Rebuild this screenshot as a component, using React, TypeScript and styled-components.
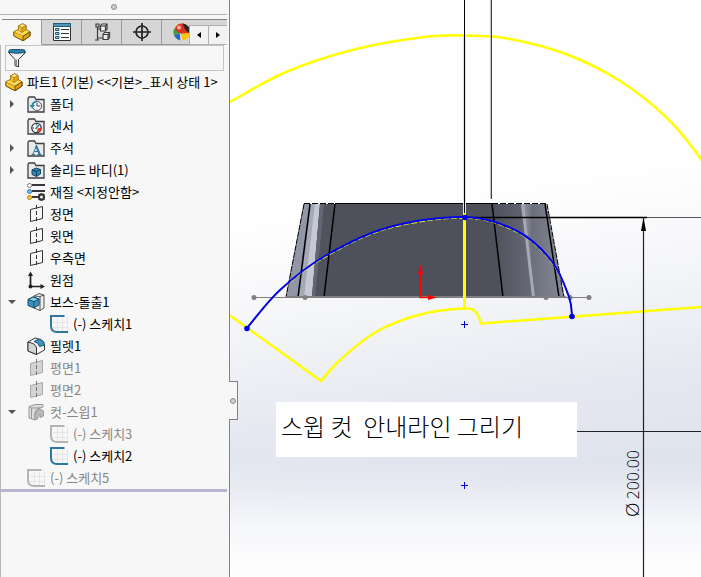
import React from 'react';
import styled, { createGlobalStyle } from 'styled-components';

const panelColor = '#f7f7f7';

type IconName =
  | 'history'
  | 'sensor'
  | 'note'
  | 'solid'
  | 'material'
  | 'plane'
  | 'origin'
  | 'extrude'
  | 'sketch'
  | 'fillet'
  | 'sweep';

type TreeItem = {
  label: string;
  icon: IconName;
  depth?: number;
  arrow?: 'open' | 'closed';
  muted?: boolean;
};

type Point = [number, number];

const treeItems: TreeItem[] = [
  { label: '폴더', icon: 'history', arrow: 'closed' },
  { label: '센서', icon: 'sensor' },
  { label: '주석', icon: 'note', arrow: 'closed' },
  { label: '솔리드 바디(1)', icon: 'solid', arrow: 'closed' },
  { label: '재질 <지정안함>', icon: 'material' },
  { label: '정면', icon: 'plane' },
  { label: '윗면', icon: 'plane' },
  { label: '우측면', icon: 'plane' },
  { label: '원점', icon: 'origin' },
  { label: '보스-돌출1', icon: 'extrude', arrow: 'open' },
  { label: '(-) 스케치1', icon: 'sketch', depth: 1 },
  { label: '필렛1', icon: 'fillet' },
  { label: '평면1', icon: 'plane', muted: true },
  { label: '평면2', icon: 'plane', muted: true },
  { label: '컷-스윕1', icon: 'sweep', arrow: 'open', muted: true },
  { label: '(-) 스케치3', icon: 'sketch', depth: 1, muted: true },
  { label: '(-) 스케치2', icon: 'sketch', depth: 1 },
  { label: '(-) 스케치5', icon: 'sketch', muted: true },
];

// cubic segments through every point (Catmull-Rom)
const smoothPath = (points: Point[]) =>
  points.slice(1).reduce((path, end, i) => {
    const start = points[i];
    const before = points[i - 1] ?? start;
    const after = points[i + 2] ?? end;
    const c1 = [start[0] + (end[0] - before[0]) / 6, start[1] + (end[1] - before[1]) / 6];
    const c2 = [end[0] - (after[0] - start[0]) / 6, end[1] - (after[1] - start[1]) / 6];
    return `${path}C${c1.join(' ')} ${c2.join(' ')} ${end.join(' ')}`;
  }, `M${points[0].join(' ')}`);

const sketchArc = smoothPath([
  [17, 328],
  [50, 290],
  [95, 256],
  [158, 227.5],
  [235, 217],
  [287, 231],
  [322, 261.5],
  [339, 297],
  [342, 316],
]);

const outerArc = smoothPath([
  [0, 102],
  [56, 72],
  [124, 49.5],
  [194, 37],
  [234, 35.5],
  [280, 39],
  [337, 54.5],
  [390, 81],
  [437, 118],
  [471, 159],
  [500, 205],
]);

const innerArc = smoothPath([
  [91, 381],
  [110, 360],
  [146, 332],
  [190, 314.5],
  [234.5, 308.5],
  [246, 312.5],
  [251, 323.5],
]);

const PartShape = () => (
  <g stroke="#6d4c00" strokeLinejoin="round">
    <path d="M5.500 3 9.500 0.800 13 2.500V6.500L17 8.800V13L10 17.800 0.800 13V8.800L5.500 6.500Z" fill="#f3c02c" />
    <path d="M5.500 3 9.500 0.800 13 2.500 9 4.800Z" fill="#ffe891" stroke="#a77b0d" strokeWidth="0.600" />
    <path d="M0.800 8.800 5.500 6.500 9 9 13 6.500 17 8.800 10 13.200Z" fill="#ffdb5e" stroke="#a77b0d" strokeWidth="0.600" />
    <path d="M5.500 3 9 4.800V9.500L5.500 7.500Z" fill="#f6c330" stroke="#a77b0d" strokeWidth="0.600" />
    <path d="M9 4.800 13 2.500V7L9 9.500Z" fill="#e0a61e" stroke="#a77b0d" strokeWidth="0.600" />
    <path d="M10 13.200 17 8.800V13L10 17.800Z" fill="#dba01a" />
  </g>
);

const FolderShape = () => (
  <path
    d="M1 16V3.500L2 2H7.500L9 4.500H17V17H1Z"
    fill="#e9e9ea"
    stroke="#3d3f45"
    strokeWidth="1.300"
  />
);

const TreeIcon = ({ name, muted }: { name: IconName; muted?: boolean }) => {
  switch (name) {
    case 'history':
      return (
        <g>
          <FolderShape />
          <circle cx="10" cy="11" r="4.500" fill="#f4f8fa" stroke="#555" />
          <path d="M10 8V11H13" stroke="#444" fill="none" />
          <path d="M10 6.300A4.700 4.700 0 0 0 5.300 11" stroke="#2b84ad" strokeWidth="1.800" fill="none" />
          <path d="M2.500 10H8L5.200 13.500Z" fill="#2b84ad" />
        </g>
      );
    case 'sensor':
      return (
        <g>
          <FolderShape />
          <circle cx="9.500" cy="11" r="4.700" fill="#fff" stroke="#333" strokeWidth="1.300" />
          <path d="M9.500 7.500V8.500M6 11H7" stroke="#333" />
          <path d="M8.500 12 12 8" stroke="#2b789e" strokeWidth="1.500" />
          <path d="M10.500 11.500 14 10.500A4 4 0 0 1 10 15Z" fill="#e5381b" />
        </g>
      );
    case 'note':
      return (
        <g>
          <FolderShape />
          <path d="M4.500 15.500H8M10.500 15.500H14.500M6 15 9.300 7M7.300 12.500H11.500" stroke="#2b789e" fill="none" />
          <path d="M9 6.500 12.800 15.500" stroke="#2b789e" strokeWidth="2" />
        </g>
      );
    case 'solid':
      return (
        <g>
          <FolderShape />
          <path d="M5 9 9 7 13.500 8.500V13L9.500 15.500 5 13.500Z" fill="#2f87b3" stroke="#164a66" />
          <path d="M5 9 9.500 10.500V15.500M9.500 10.500 13.500 8.500" stroke="#123c54" fill="none" />
        </g>
      );
    case 'material':
      return (
        <g>
          <path d="M5 2H18M5 8H18M5 14H12" stroke="#35373c" strokeWidth="2" />
          <circle cx="2.500" cy="2.500" r="2" fill="#fff" stroke="#777" />
          <circle cx="2.500" cy="8.500" r="2" fill="#70bfe8" stroke="#2b789e" />
          <circle cx="2.500" cy="14.500" r="2" fill="#ffc928" stroke="#b88508" />
          <circle cx="14.500" cy="14" r="2.500" fill="none" stroke="#333" strokeWidth="2" />
          <path
            d="M14.500 10V11.500M14.500 16.500V18M10.500 14H12M17 14H18M11.700 11.200 12.700 12.200M16.300 15.800 17.300 16.800M17.300 11.200 16.300 12.200M12.700 15.800 11.700 16.800"
            stroke="#333"
            strokeWidth="1.800"
          />
        </g>
      );
    case 'plane':
      return (
        <g stroke={muted ? '#a9a9a9' : '#333'} fill={muted ? '#d3d3d3' : 'none'}>
          <path d="M3.500 4.500 15.500 1.500V13.500L3.500 16.500Z" />
          <path d="M9.500 0V18" strokeDasharray="4 2" stroke={muted ? '#777' : '#333'} />
        </g>
      );
    case 'origin':
      return (
        <g fill="#222">
          <path d="M3.500 4V15.500H14" fill="none" stroke="#222" strokeWidth="1.700" />
          <path d="M3.500 0.500 6 5H1ZM18 15.500 13.500 13V18Z" />
          <circle cx="3.500" cy="15.500" r="2" />
        </g>
      );
    case 'extrude':
      return (
        <g strokeLinejoin="round">
          <path d="M7 3 12 0.500 17 2V15L13 17.500 7 15Z" fill="#eeeeef" stroke="#555" />
          <path d="M13 3.500 17 2M13 3.500V17.500M7 3 13 3.500" fill="none" stroke="#555" />
          <path d="M1 6.500 6 4 12 6V12L7 15 1 12.500Z" fill="#3b94bf" stroke="#164a66" />
          <path d="M1 6.500 6 4 12 6 7 8.500Z" fill="#8fd0ec" stroke="#164a66" />
          <path d="M7 8.500V15" stroke="#164a66" />
        </g>
      );
    case 'sketch':
      return (
        <g fill="none">
          <path d="M7.500 3V16M12.500 3V16M17.500 2V16M3 7.500H18M3 12.500H18" stroke="#e4e4e4" />
          <path
            d="M14.500 1H1V11Q1 17 7 17H18"
            stroke={muted ? '#b4b4b4' : '#2b789e'}
            strokeWidth="2"
          />
        </g>
      );
    case 'fillet':
      return (
        <g strokeLinejoin="round" stroke="#333">
          <path d="M1 5 8 1 13 2.500Q17 4 17.500 8V13L9.500 17.500 1 14Z" fill="#f6f6f7" />
          <path d="M9.500 17.500V11Q9 8 6 6.500L1 5V14Z" fill="#d4d5d8" />
          <path d="M7 4.500 12 2Q17 3 17.500 8L12.500 9.500Q11.500 5.500 7 4.500Z" fill="#3b94bf" stroke="#1b5674" />
        </g>
      );
    case 'sweep':
      return (
        <g fill="#dcdcdc" stroke="#999" strokeLinejoin="round">
          <path d="M2 3.500 8 1.500H16V4L13 5Q8 6 8 11V17L2 15Z" />
          <path d="M4.500 5V15.500M2 3.500 4.500 5H13" fill="none" />
          <path d="M8 17V11Q9 7 13 6L16.500 8V13L13 14.500V11.500Q11 12 10.500 16Z" fill="#bbb" />
        </g>
      );
  }
};

const Drawing = () => (
  <Canvas aria-label="스케치 도면">
    <defs>
      <linearGradient id="rightFace" x1="0" x2="1">
        <stop offset="0" stopColor="#4d4f5b" />
        <stop offset="1" stopColor="#686b78" />
      </linearGradient>
      <linearGradient id="rightEdge" x1="0" x2="1">
        <stop offset="0" stopColor="#a4a7b2" />
        <stop offset="0.250" stopColor="#6c6f7c" />
        <stop offset="1" stopColor="#858896" />
      </linearGradient>
    </defs>

    {/* body */}
    <path d="M74 204H316L334 297H56Z" fill="#4e505c" />
    <path d="M74 204H81L69 297H56Z" fill="#9396a6" />
    <path d="M81 204H87L76 297H69Z" fill="#a5a8b7" />
    <path d="M85 204H90L82 297H74Z" fill="#c5c8d5" />
    <path d="M90 204H105L94 297H82Z" fill="#50525e" />
    <path d="M90 204H94L85 297H82Z" fill="#646773" />
    <path d="M262 204H291L303 297H273Z" fill="url(#rightFace)" />
    <path d="M291 204H316L334 297H303Z" fill="url(#rightEdge)" />
    <path d="M291 204H294L305 297H302Z" fill="#a6a9b4" />
    <path d="M80 204 68 297M105 204 94 297M262 204 273 297M315 204 329 297" stroke="#000" strokeWidth="1.500" />
    <path d="M74 204 56 297M317 204 334 297" stroke="#000" strokeDasharray="6 1" />
    <path d="M105 203.500H262" stroke="#000" />
    <path d="M74 203.500H105M262 203.500H316" stroke="#000" strokeDasharray="6 2" />

    {/* horizontal reference line */}
    <path d="M24 297.500H359" stroke="#808080" />
    <path d="M56 297H336" stroke="#808080" strokeWidth="2" />
    <g fill="#808080">
      {[24, 75, 316, 340, 359].map((x) => (
        <circle key={x} cx={x} cy="297.500" r="2.500" />
      ))}
    </g>

    {/* yellow profile */}
    <g fill="none" stroke="#ffff00" strokeWidth="2.500" strokeLinejoin="round">
      <path d={outerArc} />
      <path d={innerArc} />
      <path d="M0 315.500 91 381 93 379M250 321 251 323.500 471 307 1200 254" />
      <path d="M234.500 36V308" strokeWidth="3" />
    </g>

    {/* dimension lines */}
    <path d="M234.500 0V213" stroke="#000" />
    <path d="M260.500 0V199" stroke="#c0c0c0" />
    <path d="M261.500 0V199" stroke="#404040" />
    <path d="M235 217.500H3000" stroke="#555" />
    <path d="M235 217.500H417" stroke="#000" strokeWidth="1.500" />
    <path d="M347 431.500H3000" stroke="#222" strokeWidth="1.200" />
    <path d="M413.500 218V3000" stroke="#222" strokeWidth="1.200" />
    <path d="M413.500 217 416 231H411Z" fill="#000" />

    <path d={sketchArc} transform="translate(0 1)" fill="none" stroke="#ffff00" strokeWidth="1.500" strokeDasharray="6 2" />
    <path d={sketchArc} fill="none" stroke="#0000f0" strokeWidth="2" />
    <g fill="#0000f0">
      <circle cx="17" cy="328.500" r="2.800" />
      <circle cx="235" cy="217.500" r="2.800" />
      <circle cx="342" cy="316.500" r="2.800" />
    </g>
    <path d="M231 324.500H238M234.500 321V328M231 485.500H238M234.500 482V489" stroke="#0000f0" />

    {/* origin */}
    <path d="M190.500 268V297.500H200" fill="none" stroke="#f00" strokeWidth="1.500" />
    <path d="M190.500 265 193 274H188ZM207 297.500 198 295V300Z" fill="#f00" />

    <DimensionText transform="translate(409 517) rotate(-90)">
      <tspan fontSize="19">Ø</tspan>
      <tspan dx="3">200.00</tspan>
    </DimensionText>
  </Canvas>
);

const App = () => {
  return (
    <Page>
      <GlobalStyle />
      <Sidebar>
        <PanelHandle>
          <Dot />
        </PanelHandle>
        <TabBar>
          <Tab $active aria-label="피처 트리">
            <TabIcon viewBox="0 0 18 18">
              <PartShape />
            </TabIcon>
          </Tab>
          <Tab aria-label="속성">
            <TabIcon viewBox="0 0 18 18">
              <path d="M0.500 1H17.500V17.500H0.500Z" fill="#fff" stroke="#333" />
              <path d="M0 0H18V4H0Z" fill="#1f5f80" />
              <path d="M1 1.500H17V2.500H1Z" fill="#8cc9e6" />
              <path
                d="M2.500 5.500H6V7.500H2.500ZM2.500 9.500H6V11.500H2.500ZM2.500 13.500H6V15.500H2.500Z"
                fill="#9bd0ea"
                stroke="#1c5674"
              />
              <path d="M8 6.500H16M8 10.500H16M8 14.500H16" stroke="#333" />
            </TabIcon>
          </Tab>
          <Tab aria-label="설정">
            <TabIcon viewBox="0 0 18 18">
              <g fill="none" stroke="#3b3b3b" strokeWidth="1.200">
                <path d="M3 1H6V4H3ZM4.500 4V17M4.500 6H8M4.500 15H10M2 17H6" />
                <path
                  d="M7.500 3 9 1H14V6L12.500 8H7.500ZM7.500 3H12.500V8M12.500 3 14 1M10 11.500 11.500 9.500H16.500V14.500L15 16.500H10ZM10 11.500H15V16.500M15 11.500 16.500 9.500"
                  fill="#ededed"
                />
              </g>
            </TabIcon>
          </Tab>
          <Tab aria-label="치수">
            <TabIcon viewBox="0 0 18 18">
              <g fill="none" stroke="#222" strokeWidth="1.700">
                <circle cx="9" cy="9" r="6" />
                <path d="M9 0V18M0 9H18" />
              </g>
            </TabIcon>
          </Tab>
          <Tab $clipped aria-label="표시">
            <TabIcon viewBox="0 0 18 18">
              <circle cx="9" cy="9" r="8.500" fill="#f8c515" />
              <path d="M1 6A8.500 8.500 0 0 0 1 12L8 10 4 5Z" fill="#3a9b3f" />
              <path d="M1 12A8.500 8.500 0 0 0 8.500 17.500L9 10Z" fill="#2768ca" />
              <path d="M8.500 10.500 9 17.500 7.500 17.500 7 10.500Z" fill="#f4f4f4" />
              <path d="M2 5A8.500 8.500 0 0 1 11 0.800L16 10 8 10.500Q3 9 2 5Z" fill="#df3322" />
              <path d="M9.500 0.500A8.500 8.500 0 0 1 17.500 9L16 10Q12 8 9.500 0.500Z" fill="#262626" />
              <circle cx="6" cy="4.500" r="2" fill="#fff" opacity="0.600" />
            </TabIcon>
          </Tab>
          <TabScroll>
            <ScrollButton aria-label="이전">
              <svg width="4" height="6" viewBox="0 0 4 6">
                <path d="M4 0V6L0 3Z" />
              </svg>
            </ScrollButton>
            <ScrollButton aria-label="다음">
              <svg width="4" height="6" viewBox="0 0 4 6">
                <path d="M0 0V6L4 3Z" />
              </svg>
            </ScrollButton>
          </TabScroll>
        </TabBar>
        <TreePanel>
          <FilterBox>
            <svg width="18" height="18" viewBox="0 0 18 18">
              <path d="M1 2V4L7 10.500V16.500L10.500 18V10.500L17 4V2Z" fill="#f4f4f4" stroke="#333" strokeLinejoin="round" />
              <path d="M8.500 10.500V17" stroke="#888" />
              <path d="M1 1.500Q1 0.500 9 0.500T17 1.500V3.500Q9 5 1 3.500Z" fill="#2b84ad" stroke="#164a66" />
            </svg>
            <FilterInput type="text" aria-label="필터" />
          </FilterBox>
          <RootRow>
            <RowIcon viewBox="0 0 18 18">
              <PartShape />
            </RowIcon>
            <RowText>{'파트1 (기본) <<기본>_표시 상태 1>'}</RowText>
          </RootRow>
          <Tree>
            {treeItems.map((item) => (
              <TreeRow key={item.label} $depth={item.depth ?? 0}>
                <ArrowSlot>
                  {item.arrow && (
                    <ArrowButton aria-label={item.label} aria-expanded={item.arrow === 'open'}>
                      <svg width="9" height="8" viewBox="0 0 9 8">
                        <path d={item.arrow === 'open' ? 'M1 2H9L5 6Z' : 'M3 0 7 4 3 8Z'} />
                      </svg>
                    </ArrowButton>
                  )}
                </ArrowSlot>
                <RowIcon viewBox="0 0 18 18">
                  <TreeIcon name={item.icon} muted={item.muted} />
                </RowIcon>
                <RowText $muted={item.muted}>{item.label}</RowText>
              </TreeRow>
            ))}
          </Tree>
          <RollbackBar />
        </TreePanel>
        <SideHandle aria-label="패널 접기">
          <Dot />
        </SideHandle>
      </Sidebar>
      <Viewport>
        <Drawing />
        <Caption>{'스윕 컷  안내라인 그리기'}</Caption>
      </Viewport>
    </Page>
  );
};

const GlobalStyle = createGlobalStyle`
  * {
    box-sizing: border-box;
  }

  body {
    margin: 0;
    font-family: 'Noto Sans CJK KR', sans-serif;
    font-size: 13px;
    color: #000;
  }

  button {
    padding: 0;
    border: 0;
    background: none;
    font: inherit;
  }
`;

const Page = styled.div`
  display: flex;
  min-height: 100vh;
`;

const Sidebar = styled.aside`
  position: relative;
  z-index: 1;
  display: flex;
  flex-direction: column;
  flex: 0 0 230px;
  border-right: 1px solid #828282;
  background: ${panelColor};
`;

const PanelHandle = styled.div`
  display: flex;
  align-items: center;
  justify-content: center;
  height: 15px;
  margin-right: 2px;
  border-bottom: 1px solid #b4b4b4;
`;

const Dot = styled.span`
  width: 6px;
  height: 6px;
  border: 1px solid #8c8c8c;
  border-radius: 50%;
  background: #d0d0d0;
`;

const TabBar = styled.nav`
  display: flex;
  height: 26px;
  margin: 4px 2px 0;
  border-top: 1px solid #828282;
  background: #d6d6d6;
`;

const Tab = styled.button<{ $active?: boolean; $clipped?: boolean }>`
  display: flex;
  align-items: center;
  justify-content: ${({ $clipped }) => ($clipped ? 'flex-start' : 'center')};
  flex: 0 0 ${({ $clipped }) => ($clipped ? 27 : 40)}px;
  overflow: hidden;
  padding-left: ${({ $clipped }) => ($clipped ? 11 : 0)}px;
  border-right: ${({ $clipped }) => ($clipped ? 0 : 1)}px solid #999;
  border-bottom: 1px solid ${({ $active }) => ($active ? panelColor : '#999')};
  background: ${({ $active }) => ($active ? panelColor : '#d6d6d6')};
`;

const TabIcon = styled.svg`
  flex: none;
  width: 18px;
  height: 18px;
`;

const TabScroll = styled.div`
  display: flex;
  flex: 1;
  padding-top: 5px;
`;

const ScrollButton = styled.button`
  display: flex;
  align-items: center;
  justify-content: center;
  flex: 1;
  border: 1px solid #b0b0b0;
  border-right: 0;
  background: #f2f2f2;
`;

const TreePanel = styled.div`
  flex: 1;
  border-left: 1px solid #b8b8b8;
`;

const FilterBox = styled.label`
  display: flex;
  align-items: center;
  height: 26px;
  margin: 0 5px 0 4px;
  padding-left: 2px;
  border: 1px solid #c4c4c4;
`;

const FilterInput = styled.input`
  flex: 1;
  min-width: 0;
  border: 0;
  outline: 0;
  background: transparent;
`;

const RootRow = styled.div`
  display: flex;
  align-items: center;
  gap: 4px;
  height: 22px;
  padding-left: 4px;
`;

const Tree = styled.ul`
  margin: 0;
  padding: 0;
  list-style: none;
`;

const TreeRow = styled.li<{ $depth: number }>`
  display: flex;
  align-items: center;
  gap: 5px;
  height: 22px;
  padding-left: ${({ $depth }) => 6 + $depth * 23}px;
`;

const ArrowSlot = styled.span`
  display: flex;
  width: 15px;
`;

const ArrowButton = styled.button`
  display: flex;
  fill: #555;
`;

const RowIcon = styled.svg`
  flex: none;
  width: 18px;
  height: 18px;
`;

const RowText = styled.span<{ $muted?: boolean }>`
  line-height: 22px;
  white-space: nowrap;
  color: ${({ $muted }) => ($muted ? '#868686' : '#000')};
`;

const RollbackBar = styled.div`
  height: 3px;
  margin-right: 2px;
  background: #b5b5cd;
`;

const SideHandle = styled.button`
  position: absolute;
  top: 381px;
  right: -9px;
  display: flex;
  align-items: center;
  justify-content: center;
  width: 9px;
  height: 39px;
  border: 1px solid #828282;
  border-left: 0;
  background: ${panelColor};
`;

const Viewport = styled.main`
  position: relative;
  flex: 1;
  min-width: 0;
  overflow: hidden;
  background:
    linear-gradient(180deg, transparent 80%, rgba(255, 255, 255, 0.2) 84%, rgba(255, 255, 255, 0.7) 91%, #fefefe 99%),
    linear-gradient(172deg, #fefefe 36%, #f4f5f8 52%, #e5e8f0 68%, #dfe3ed 82%);
`;

const Canvas = styled.svg`
  position: absolute;
  width: 100%;
  height: 100%;
`;

const DimensionText = styled.text`
  font-family: 'Open Sans', 'Noto Sans', sans-serif;
  font-size: 16px;
  font-weight: 300;
  fill: #000;
`;

const Caption = styled.p`
  position: absolute;
  top: 402px;
  left: 46px;
  width: 301px;
  height: 55px;
  margin: 0;
  padding: 0 5px;
  background: #fff;
  font-size: 24px;
  font-weight: 300;
  line-height: 48px;
  white-space: pre;
`;

export default App;
